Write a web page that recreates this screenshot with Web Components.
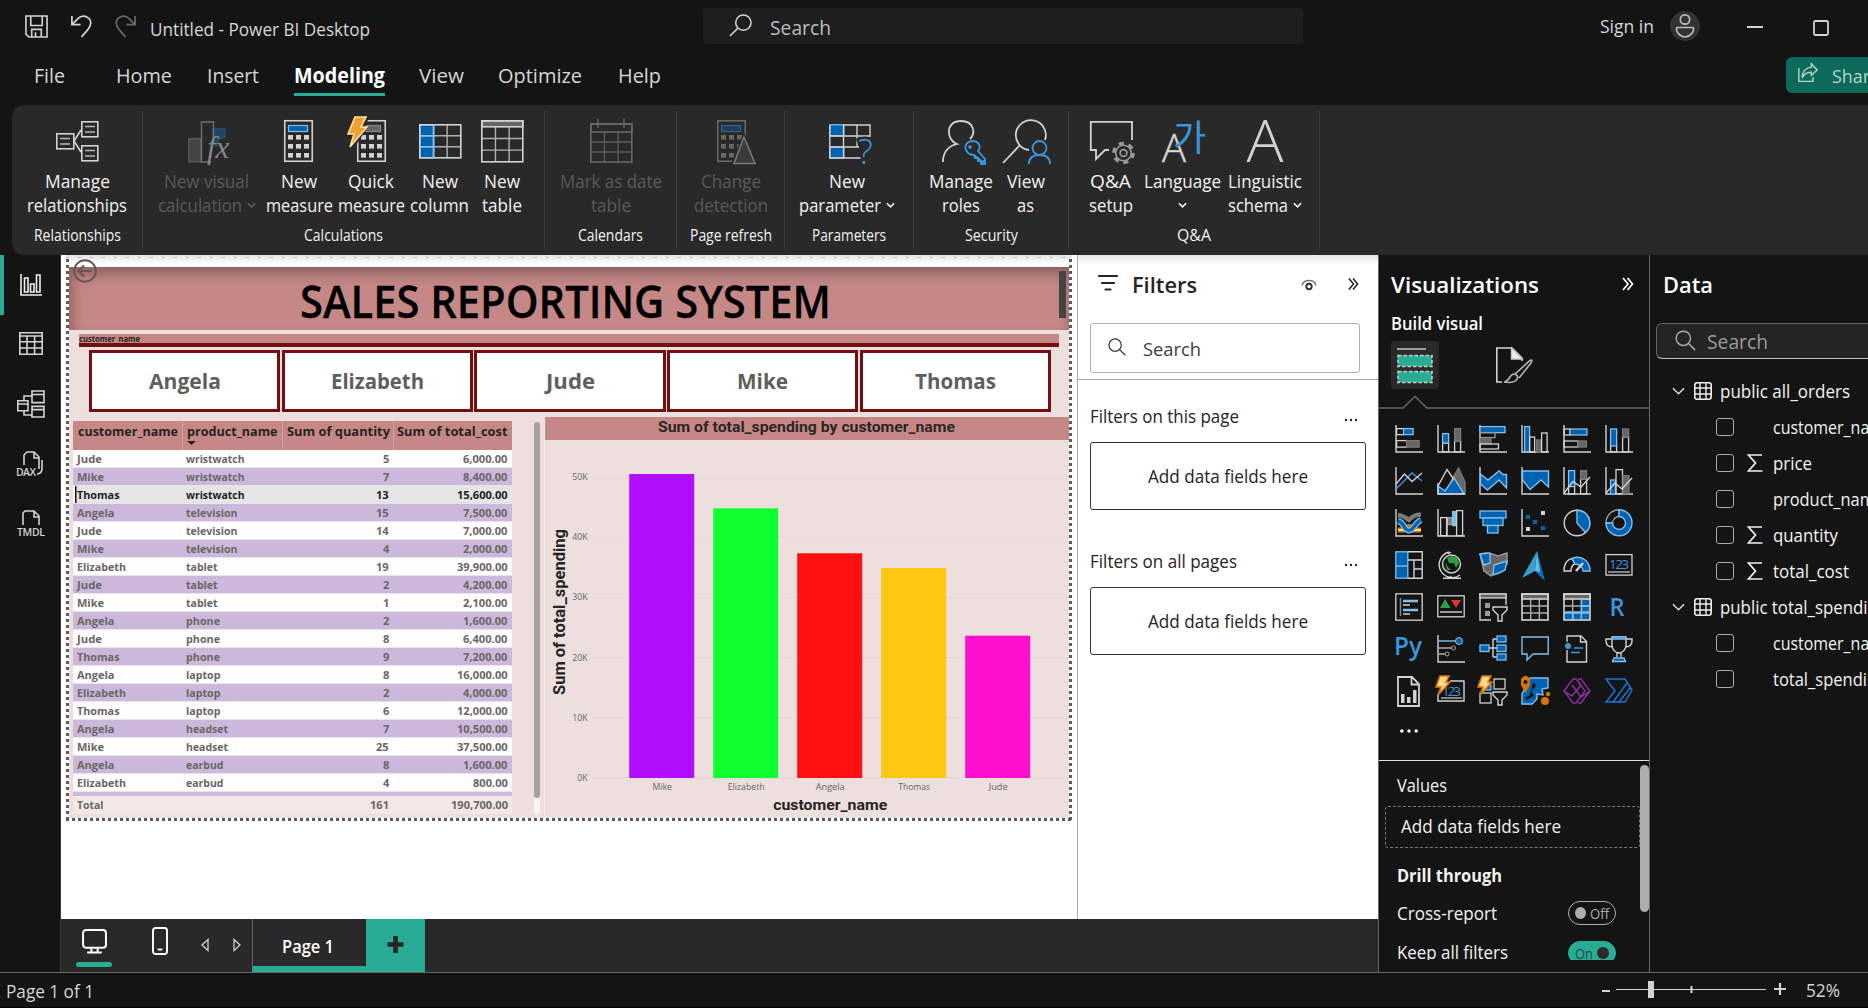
<!DOCTYPE html>
<html lang="en">
<head>
<meta charset="utf-8">
<title>Untitled - Power BI Desktop</title>
<style>
html,body{margin:0;height:100%;overflow:hidden;background:#141414}
body{font-family:"Open Sans","Noto Sans",sans-serif;color:#d6d6d6}
</style>
</head>
<body>
<pbi-app></pbi-app>
<script>
const L='#d2d2d2', G='#797775', B='#0063b1', LB='#83beec', MB='#3a96dd', O='#d87400';
const axis=`<path d="M1 0V27H28" fill="none" stroke="${L}" stroke-width="1.4"/>`;
const r=(x,y,w,h,f='none',s=L,sw=1.3)=>`<rect x="${x}" y="${y}" width="${w}" height="${h}" fill="${f}" stroke="${s}" stroke-width="${sw}"/>`;
const p=(d,s=L,f='none',sw=1.4,x='')=>`<path d="${d}" fill="${f}" stroke="${s}" stroke-width="${sw}" ${x}/>`;
const calc=(x,s,d,ds)=>r(x+.75,3.75,27.5,40.5,'none',s,1.6)+r(x+4.5,8.5,19,6,d,ds,1.2)+[18,27,36].map(y=>[4,12,20].map(k=>`<rect x="${x+k}" y="${y}" width="5" height="4.6" fill="${s}"/>`).join('')).join('');
const grid=(x,y,w,h,hy,s,g)=>r(x,y,w,hy,g,s,1.6)+p(`M${x+w/3} ${y+hy}V${y+h}M${x+2*w/3} ${y+hy}V${y+h}M${x} ${y+hy+(h-hy)/3}h${w}M${x} ${y+hy+2*(h-hy)/3}h${w}`,s,'none',1.4,'opacity=".8"')+r(x,y,w,h,'none',s,1.6);
const bolt=(x,y,k=1)=>`<path transform="translate(${x} ${y}) scale(${k})" d="M8 0H19L14 10H20L3 30L7 17H1Z" fill="#f0a030" stroke="#ffe4a0" stroke-width="1.6"/>`;
const bolt2=`<path d="M3 -1H12L9 5H13L1 18L4 10H-1Z" fill="#ffd98a" stroke="${O}" stroke-width="1.6"/>`;
const globe=`<circle cx="14.5" cy="13" r="9" fill="none" stroke="${L}" stroke-width="1.4"/><path d="M10 7L14 5L20 6L22 12L19 17L17 12L12 12ZM8 11L11 16L14 19L10 19Z" fill="#2f9e44"/>`+p('M12 1A13 13 0 1 0 23 24M14 25V27M6 27.3H24M11 3L14 1');
const ICONS={
 save:[24,24,p('M1 1H23V23H4L1 20ZM6 1V11H18V1M7 23V15H17V23M11 18V23',L,'none',1.7)],
 undo:[24,24,p('M2 1V10H11M2 10L8 4C14-2 24 3 21 11C20 15 16 18 12 23',L,'none',1.8)],
 redo:[24,24,p('M22 1V10H13M22 10L16 4C10-2 0 3 3 11C4 15 8 18 12 23','#686868','none',1.8)],
 lens:[24,24,p('M9 15L1 23',L,'none',1.6)+`<circle cx="15" cy="9" r="8" fill="none" stroke="${L}" stroke-width="1.6"/>`],
 find:[24,24,p('M15.5 15.5L23 23','currentColor','none',1.7)+`<circle cx="9.5" cy="9.5" r="8.2" fill="none" stroke="currentColor" stroke-width="1.7"/>`],
 user:[30,30,`<circle cx="15" cy="15" r="15" fill="#333"/><circle cx="15" cy="8.5" r="4.7" fill="none" stroke="#bbb" stroke-width="1.7"/>`+p('M7 16.5H23C25 20 20 26 15 26S5 20 7 16.5Z','#bbb','none',1.7)],
 min:[16,16,p('M0 8H16',L,'none',2)],
 max:[16,16,`<rect x="1" y="1" width="14" height="14" rx="1.5" fill="none" stroke="${L}" stroke-width="1.8"/>`],
 share:[24,24,p('M1 6V22H18V17M16 1L23 8.5L16 15V11C11 11 7 13 5 18C5 11 9 6 16 5Z','#b9d2cd','none',1.7)],
 chev:[10,6,p('M1 1L5 5L9 1','currentColor','none',1.8)],
 rel:[48,48,p('M21 24L28 13M21 24L28 35',L,'none',1.7)+r(3.8,16.8,17,15,'none',L,1.6)+r(28.8,4.8,16,15,'none',L,1.6)+r(28.8,28.8,16,15,'none',L,1.6)+p('M7 21.5H17M7 27H17M32 9.5H42M32 15H42M32 33.5H42M32 39H42','#b5b5b5','none',1.6)],
 visual:[48,48,r(5.8,21.8,12,23,'#444','#5e5e5e')+p('M30 26V12H42V20L36 22L33 30','#29506e','#1e4363')+p('M28 45H18.5V5H30.5V27','#707070')+`<text x="24" y="41" font-family="Liberation Serif" font-style="italic" font-size="31" fill="#858585">fx</text>`],
 measure:[48,48,calc(9,L,B,LB)],
 quick:[48,48,calc(10,L,'#666','#888')+`<path d="M8 -2H23L18 10H21L7 31L4 26Z" fill="#292929"/>`+bolt(0,0)],
 column:[48,48,r(3.8,7.8,14,33,B,LB)+grid(3.8,7.8,41,33,0,L,'none')+p('M4 18.8H17M4 29.8H17M17.5 8V41',LB)],
 table:[48,48,grid(3.8,3.8,41,41,6,L,'#666')],
 calendar:[48,48,grid(3.8,7,41,38,8,'#686868','none')+p('M11 2V11M37 2V11','#686868')],
 change:[48,48,calc(10,'#686868','#1c3f60','#3b6484')+p('M37 21L48 46H27Z','#292929','#292929',5)+p('M37 20L48 46.5H27Z','#777','#3a3a3a',1.6)],
 param:[48,48,r(6.8,7.8,14,11,B,LB)+r(6.8,30,14,11,B,LB)+p('M20 8H47V20M6.8 8V41H40M20.5 8V41M34 8V30M7 19H47M7 30H36')+`<text x="35" y="47" font-family="Open Sans" font-size="35" font-weight="300" fill="${MB}" stroke="#292929" stroke-width="5" paint-order="stroke">?</text>`],
 roles:[48,48,p('M6 45C6 34 12 29 20 27C9 23 8 4 24 4C37 4 39 16 33 22',L,'none',1.8)+p('M37 38L47 46V43M37 38C27 38 25 25 35 24C43 24 44 31 41 34L48 42V47H44V44H41V41H38Z',MB,'none',1.8)+`<circle cx="33" cy="30" r="1.8" fill="${MB}"/>`],
 viewas:[48,48,p('M18 28L1 46M27 33A15 15 0 1 1 43 23',L,'none',1.8)+`<circle cx="37.5" cy="31" r="7" fill="none" stroke="${MB}" stroke-width="1.8"/>`+p('M27 47C27 41 31 38 37.5 38S48 41 48 47',MB,'none',1.8)],
 qa:[48,48,p('M22 33H18L9 42V33H3.8V4.8H45V23',L,'none',1.8)+`<circle cx="36.5" cy="36" r="9.3" fill="none" stroke="#9a9a9a" stroke-width="4" stroke-dasharray="4.9 4.84"/><circle cx="36.5" cy="36" r="7.8" fill="#292929" stroke="#9a9a9a" stroke-width="1.6"/><circle cx="36.5" cy="36" r="3.4" fill="none" stroke="#9a9a9a" stroke-width="1.6"/>`],
 lang:[48,48,`<text x="3" y="45" font-family="Open Sans" font-weight="300" font-size="39" fill="${L}" stroke="${L}" stroke-width=".500" textLength="24" lengthAdjust="spacingAndGlyphs">A</text><text x="14" y="34" font-family="Noto Sans CJK KR" font-size="36" fill="${MB}">가</text>`],
 ling:[48,48,`<text x="5.5" y="45" font-family="Open Sans" font-weight="300" font-size="58" fill="${L}" textLength="37" lengthAdjust="spacingAndGlyphs">A</text>`],
 nReport:[28,28,p('M4 3V24H25M7.5 7H11V21H7.5ZM13.5 13H17V21H13.5ZM19.5 4H23V21H19.5Z','#eee','none',1.6)],
 nTable:[28,28,p('M2.8 3.8H25.2V25.2H2.8ZM2.8 7H25M2.8 12.8H25M2.8 19H25M10 7V25M17.6 7V25',L,'none',1.6)],
 nModel:[28,28,p('M.8 10.8H11V20.8H.8ZM.8 14H11M15 1H27V12.6H15ZM15 4.5H27M15 16.4H27V27H15ZM15 19.6H27M7 10V6H15M7 21V25H15',L,'none',1.6)],
 nDax:[28,28,p('M7 14V4L10 1H17L22 6V18M17 1V7H22M25 9V17Q25 23 20 23',L,'none',1.6)+`<text x="-1" y="24.500" font-family="Open Sans" font-size="10.500" font-weight="600" fill="${L}" textLength="20">DAX</text>`],
 nTmdl:[28,28,p('M6 15V3L8 1H17L22 6V15M17 1V7H22',L,'none',1.6)+`<text x="0" y="25.500" font-family="Open Sans" font-size="10.500" font-weight="600" fill="${L}" textLength="28">TMDL</text>`],
 back:[24,24,`<circle cx="12" cy="12" r="10.800" fill="none" stroke="#625856" stroke-width="2"/>`+p('M19 12H6M11 6.500L5.500 12L11 17.500','#625856','none',2.2)],
 filter:[20,18,p('M1 2H19M4 9H16M7.500 15.500H12.500','#252525','none',2.2,'stroke-linecap="round"')],
 eye:[16,12,p('M1 6C3-.6 13-.6 15 6','#777','none',1.5)+`<circle cx="8" cy="7" r="2.700" fill="none" stroke="#333" stroke-width="1.900"/>`],
 more:[12,14,p('M1 1L6 7L1 13M5.500 1L10.500 7L5.500 13','currentColor','none',1.7)],
 dots:[14,4,`<g fill="currentColor"><circle cx="2" cy="2" r="1.200"/><circle cx="7" cy="2" r="1.200"/><circle cx="12" cy="2" r="1.200"/></g>`],
 build:[36,36,p('M0 2H29','#aaa','none',1.8)+`<g fill="#2aac94" stroke="#ccc" stroke-width="1.600" stroke-dasharray="3.500 2"><rect x="1" y="8.500" width="34" height="11"/><rect x="1" y="24.500" width="34" height="11"/></g>`],
 format:[36,36,p('M6 35H.8V1H16L26 11V14',L,'none',1.6)+p('M15.500 1V12H26Z','#ccc','#eee')+p('M8 35C14 35 13 26 19 27C23 29 23 35 13 35.500ZM19 27L34 13.500Q37 12 35 16L23 31','#b5b5b5','#141414',1.6)],
 desktop:[24,24,`<rect x="1" y="1" width="22" height="17" rx="3" fill="none" stroke="#fff" stroke-width="1.900"/>`+p('M9 18V22M15 18V22M5 22.600H19','#fff','none',1.9)],
 phone:[16,28,`<rect x="1" y="1" width="14" height="26" rx="2.500" fill="none" stroke="#fff" stroke-width="1.900"/>`+p('M5.500 22.500H10.500','#fff','none',1.8)],
 prev:[8,14,p('M7 1.500V12.500L1 7Z',L,'none',1.3)],
 next:[8,14,p('M1 1.500V12.500L7 7Z',L,'none',1.3)],
 plus:[16,17,p('M8 0V17M0 8.500H16','#252525','none',4.6)],
 plus2:[12,12,p('M6 0V12M0 6H12',L,'none',2.2)],
 minus:[8,4,p('M0 2H8',L,'none',2)],
 tchev:[14,9,p('M1 1L7 7L13 1','#ddd','none',1.6)],
 tgrid:[18,18,`<rect x=".800" y=".800" width="16.400" height="16.400" rx="2.500" fill="none" stroke="#eee" stroke-width="1.600"/>`+p('M6 1V17M12 1V17M1 6H17M1 12H17','#eee','none',1.4)],
 sigma:[16,18,p('M15 1H1.500L8.500 9L1.500 17H15.500','#eee','none',1.7)],
 v1:axis+r(1.6,3.6,7,6)+r(8.6,3.6,9.5,6,B,LB)+r(1.6,15.6,10,6.5)+r(11.6,15.6,12.5,6.5,'#666',G),
 v2:axis+r(5.6,18,6,9)+r(5.6,8.600,6,9.4,B,LB)+r(17.6,16,6,11)+r(17.6,3.6,6,12.4,'#666',G),
 v3:axis+r(1,1.6,25,6,B,LB)+r(1,7.6,15,5,'none','#999')+r(1,14,11,4.5,'#666',G)+r(1,19,18.5,5),
 v4:axis+r(3.6,1.6,5,25,B,LB)+r(8.6,12,5,15)+r(15.6,15,4.500,12,'#666',G)+r(20.6,8,5.5,19),
 v5:axis+r(1,4,6,6)+r(7,4,17,6,B,LB)+r(1,16,14,6)+r(15,16,8.500,6,'#666',G),
 v6:axis+r(5.6,20,6,7)+r(5.6,4,6,17,B,LB)+r(17.6,12,6,15)+r(17.6,4,6,8,'#666',G),
 v7:axis+p('M1 22L17 6L27 14',MB)+p('M1 17L9.500 7L17 14.500L27 6'),
 v8:p('M14 14L21.500 1L28 15V27Z',G,'#666')+p('M1 19L10 2.500L18 14')+p('M1 19L8 24L17 11L27 27H1Z',LB,B)+p('M1 16V27H28'),
 v9:axis+p('M1.500 7L9 13L20 4L24 7.500H27.500V21L20 13L8.500 23L1.500 17Z',LB,B),
 v10:axis+p('M1.500 4H27.500V20L20 13L9 22.500L1.500 13Z',LB,B),
 v11:axis+r(5.6,18,6,9)+r(5.6,3.6,6,16,B,LB)+r(17.6,12,6,15)+r(17.6,3.6,6,8.4,'#666',G)+p('M1 26L10 14.500L18 20L27 10'),
 v12:axis+r(5.6,13,5,14,B,LB)+r(11,2.600,6.500,24)+r(18,8.600,6,18,'#666',G)+p('M1 26L10 16L17 22L27 11'),
 v13:axis+p('M3 21H9Q14 14 19 21H26',O,'none',5)+p('M3 21H9M19 21H26','#ffd98a','none',1.8)+p('M3 6Q9 7 14 11Q20 5 26 6','#797979','none',4.5)+p('M3 12Q7 13 10 19Q14 24 18 19Q22 13 26 11',LB,'none',6)+p('M3 12Q7 13 10 19Q14 24 18 19Q22 13 26 11',B,'none',3.4),
 v14:axis+r(3.6,8.6,6,18)+r(10.600,8.600,4,7,'#777','#999')+r(15.6,2.600,3,14,LB,LB)+r(19.6,1.600,6,25)+p('M10 9V27'),
 v15:r(1,2,26,7,B,LB)+r(4,9,20,7.500,B,LB)+r(8.5,16.500,10.500,7.500,B,LB),
 v16:axis+`<path d="M5 6h4v4h-4zM12 11h4v4h-4zM20 17h4v4h-4z" fill="${B}"/><path d="M20 2h4v4h-4zM5 18h4v4h-4z" fill="${L}"/>`,
 v17:`<circle cx="14" cy="14" r="12.800" fill="none" stroke="${L}" stroke-width="1.400"/>`+p('M14 14V1.200A12.800 12.800 0 0 1 22.500 23.500Z',LB,B),
 v18:p('M14 .800A13 13 0 0 0 1 14H7.500A6.500 6.500 0 0 1 14 7.500Z','#999')+p('M14 .800A13 13 0 1 1 1 14H7.500A6.500 6.500 0 1 0 14 7.500Z',LB,B),
 v19:r(.8,.8,12,26.4,B,LB)+p('M1 15H13',LB)+p('M13 .800H27.200V27.200H13M13 9H27M19 9V27M19 18H27'),
 v20:globe,
 v21:p('M1 3L7 2L13 3L19 5L28 2V13L19 14L16 20L12 25L5 20L3 12Z','#999','#666')+p('M1 3L11 2L11 12L5 14Z',LB,B)+p('M15 14L28 10L26 19L20 22L14 24Z',LB,B),
 v22:`<path d="M16 0L1 27L14 20Z" fill="#3a9cc8"/><path d="M16 0L24 30L14 20Z" fill="#1372b8"/><path d="M16 0L14 20L19 21Z" fill="#5cc0e4"/>`,
 v23:p('M1 20C1 12 5 8 9 7.500L12 13C9 14 8 17 8 20Z')+p('M9 7.500C20 3 27 12 27 20H20C20 16 16 13 12 13Z',LB,B)+p('M13 20L20 12',L,'none',2.6),
 v24:r(1,3.600,26,20.500)+p('M3 21H25','#aaa','none',1.5)+`<text x="4" y="18" font-family="Open Sans" font-size="13.500" fill="${MB}" textLength="20">123</text>`,
 v25:r(.8,.8,26.4,26.4)+p('M5.500 5V23','#888')+p('M8 8H23M8 17H23',LB,'none',2.6)+p('M8 12H15M8 21H15',L),
 v26:r(.8,2.8,26.4,21)+`<path d="M3 15L8 6L13.500 15Z" fill="#2f9e44"/><path d="M14 7H24L19 15Z" fill="#e03131"/>`+p('M3 19H25'),
 v27:p('M12 27H1V1H27V12')+r(1,1,26,4,'#666')+`<path d="M6 10h5v5h-5zM6 18h5v5h-5z" fill="#999"/>`+p('M14 14H28V17L23 22V28H19V22L14 17Z',L,'#141414'),
 v28:grid(1,1,26,26,5,L,'#666'),
 v29:`<path d="M18 6H27V27H1V19H18Z" fill="${B}"/>`+grid(1,1,26,26,5,L,'#666')+p('M18.500 6V27M10 19V27M1 19H27M18 13H27',LB),
 v30:`<text x="4.500" y="23" font-family="Open Sans" font-size="25" font-weight="600" fill="${MB}" textLength="15" lengthAdjust="spacingAndGlyphs">R</text>`,
 v31:`<text x="-1" y="20" font-family="Open Sans" font-size="25" font-weight="600" fill="${MB}" textLength="28" lengthAdjust="spacingAndGlyphs">Py</text>`,
 v32:axis+p('M1 6H20',LB)+`<circle cx="22" cy="6" r="3.500" fill="${B}" stroke="${LB}"/>`+p('M1 13H15M1 19H8','#aaa')+`<circle cx="16.500" cy="13" r="2" fill="none" stroke="#aaa"/><circle cx="10" cy="19" r="2" fill="none" stroke="#aaa"/>`,
 v33:p('M10 13H18M14 4V22M14 4H18M14 22H18')+r(1,10,9,6.500,B,LB)+r(18,1,9,6,B,LB)+r(18,10,9,6.500,B,LB)+r(18,19,9,6,B,LB),
 v34:p('M1 2H27.200V19H12L6 25V19H1Z',LB),
 v35:p('M4 7V1H18L23.500 6.500V27H4V15M17.500 1V7H23.500')+`<circle cx="5" cy="11" r="3" fill="${MB}"/>`+p('M11 13H20M8 17.500H17',MB),
 v36:p('M7 2H21M7 2V11Q8 17 14 18Q20 17 21 11V2M7 4H1V6Q1 12 8 12M21 4H27V6Q27 12 20 12M12 18V22M16 18V22')+p('M7 2H21V4H7ZM9 23H19L20.500 26.500H7.500Z',LB,B),
 v37:p('M3 0H17L24 7V29H3ZM16.500 0V7.500H24',L,'none',1.8)+`<path d="M6 17h3.500v9h-3.500zM12 20h3.500v6h-3.500zM18 13h3.500v13h-3.500z" fill="${L}"/>`,
 v38:p('M13 4H27V24H1V17')+p('M4 21H25','#aaa','none',1.5)+`<text x="5" y="19" font-family="Open Sans" font-size="13.500" fill="${MB}" textLength="19">123</text>`+bolt2,
 v39:r(15,2,11,10)+r(1,16,11,10)+r(6,8,6,5,B,LB)+p('M14 15H28V18L23 23V28H19V23L14 18Z',L,'#141414')+bolt2,
 v40:p('M9 1H27V11L21 12L22 18L16 17V22L11 27H1V17Z',LB,B)+p('M12 3L16 9L11 14L14 19L5 24L3 20L8 18Z',B,'#141414')+`<path d="M4.500 16L0 8V2L3-1H6L9 2V8Z" fill="${O}"/><circle cx="4.500" cy="5" r="2" fill="#141414"/><circle cx="24" cy="24" r="4" fill="${O}"/><circle cx="27" cy="17" r="2.200" fill="${O}"/>`,
 v41:p('M1 14L10 2H13L18 8L9 19ZM9 8L18 20L27 14L18 2H15M1 14L10 26H13L22 14L13 26M15 26H18L27 14M13 2L22 14','#8b2fa0','none',1.4),
 v42:p('M1 2H20L27 13L20 25H1L10 14ZM8 25L22 6M14 25L25 11','#1a78d8','none',1.4)
};

/* Base class: one open shadow root, filled from the class's css and view */
class Part extends HTMLElement{
  connectedCallback(){
    if(this.shadowRoot)return;
    const s=this.attachShadow({mode:'open'});
    s.innerHTML=`<style>*{box-sizing:border-box}:host{box-sizing:border-box}${this.css()}</style>${this.view()}`;
  }
  css(){return ''} view(){return '<slot></slot>'}
  at(n,d=''){return this.getAttribute(n)??d}
}
const T=(w,t,st='')=>`<fit-text w="${w}" style="${st}">${t.replace(/&/g,'&amp;')}</fit-text>`;
const I=(n,w,h,st='')=>`<ui-icon n="${n}" w="${w}" h="${h}" style="${st}"></ui-icon>`;

class UiIcon extends Part{
  css(){return `:host{display:block;flex:none;width:${this.at('w')}px;height:${this.at('h')}px}svg{display:block;overflow:visible}`}
  view(){let d=ICONS[this.at('n')];if(!Array.isArray(d))d=[28,28,d];
    return `<svg width="${this.at('w')}" height="${this.at('h')}" viewBox="0 0 ${d[0]} ${d[1]}">${d[2]}</svg>`}
}
class FitText extends Part{
  css(){return `:host{display:block;flex:none;white-space:nowrap;width:${this.at('w')}px}span{display:inline-block;transform-origin:0 50%}`}
  view(){return '<span><slot></slot></span>'}
  connectedCallback(){super.connectedCallback();
    const s=this.shadowRoot.querySelector('span'),n=s.offsetWidth;
    if(n)s.style.transform=`scaleX(${this.at('w')/s.getBoundingClientRect().width})`;
  }
}
class TitleBar extends Part{
  css(){return `:host{display:flex;height:52px;font-size:18px;line-height:24px;align-items:flex-start}
  .s{display:flex;width:600px;height:36px;background:#1e1e1e;border-radius:4px;margin:8px 0 0 333px;padding:6px 0 0 26px;font-size:20px;line-height:26px;color:#bdbdbd}`}
  view(){return I('save',23,23,'margin:15px 0 0 25px')+I('undo',23,23,'margin:15px 0 0 22px')+I('redo',23,23,'margin:15px 0 0 21px')+T(220,'Untitled - Power BI Desktop','margin:17px 0 0 13px')+
  `<div class="s">${I('lens',23,23)}${T(61,'Search','margin:1px 0 0 18px')}</div>`+T(54,'Sign in','margin:14px 0 0 297px')+I('user',30,30,'margin:11px 0 0 16px')+I('min',16,16,'margin:19px 0 0 47px')+I('max',16,16,'margin:20px 0 0 50px')}
}
class MenuTabs extends Part{
  css(){return `:host{display:flex;height:53px;font-size:20.5px;line-height:28px;align-items:flex-start;padding-top:9px}
  .on{color:#fff;font-weight:700;height:35px;border-bottom:3px solid #2aac94}
  .sh{display:flex;margin:-4px 0 0 1125px;height:36px;width:120px;background:#0e6a5a;border-radius:6px;color:#b9d2cd;font-size:18px;line-height:24px;padding:7px 0 0 10px;flex:none}`}
  view(){return [['File',31,34],['Home',56,51],['Insert',52,35],['Modeling',91,35,1],['View',45,34],['Optimize',84,34],['Help',43,36]].map(m=>m[3]?`<div class="on" style="margin-left:${m[2]}px">${T(m[1],m[0])}</div>`:T(m[1],m[0],`margin-left:${m[2]}px`)).join('')+
  `<div class="sh">${I('share',24,20,'margin-top:-1px')}${T(48,'Share','margin-left:12px')}</div>`}
}
class RibbonButton extends Part{
  css(){return `:host{display:flex;flex-direction:column;align-items:center;flex:none;width:${this.at('w')}px;margin-left:${this.at('gap',0)}px;color:${this.hasAttribute('off')?'#5a5a5a':'#f2f2f2'};font-size:18px;line-height:24px}
  .l{display:flex;align-items:center;height:24px;gap:5px}ui-icon{margin-bottom:4px}.l ui-icon{margin:0}`}
  view(){const c=this.hasAttribute('menu')?I('chev',9,6):'';
    const [a,aw]=this.at('a').split('|'),[b,bw]=this.at('b').split('|');
    return I(this.at('icon'),48,48)+`<div class="l">${T(aw,a)}</div><div class="l">${b?T(bw,b):''}${c}</div>`}
}
class RibbonGroup extends Part{
  css(){return `:host{display:flex;flex-direction:column;flex:none;width:${this.at('w')}px;padding-top:6px;margin-top:6px;height:138px;border-right:1px solid #3d3d3d;color:#f2f2f2}
  .b{display:flex;height:108px;justify-content:center}.g{display:flex;justify-content:center;font-size:15.5px;line-height:21px}`}
  view(){return `<div class="b"><slot></slot></div><div class="g">${T(this.at('lw'),this.at('label'))}</div>`}
}
class RibbonBar extends Part{
  css(){return `:host{display:flex;height:150px;margin-left:12px;background:#292929;border-radius:12px 0 0 12px;position:relative;z-index:2}`}
  view(){const b=(i,w,gap,a,b,x='')=>`<ribbon-button icon="${i}" w="${w}" gap="${gap}" a="${a}" b="${b}" ${x}></ribbon-button>`;
  const g=(w,l,lw,c)=>`<ribbon-group w="${w}" label="${l}" lw="${lw}">${c}</ribbon-group>`;
  return g(131,'Relationships',87,b('rel',100,0,'Manage|65','relationships|100'))+
  g(402,'Calculations',79,b('visual',98,-5,'New visual|85','calculation|84','off menu')+b('measure',67,10,'New|36','measure|67')+b('quick',67,5,'Quick|46','measure|67')+b('column',60,5,'New|36','column|59')+b('table',46,9,'New|36','table|40'))+
  g(132,'Calendars',65,b('calendar',102,0,'Mark as date|102','table|40','off'))+
  g(108,'Page refresh',82,b('change',76,0,'Change|60','detection|74','off'))+
  g(129,'Parameters',74,b('param',96,-4,'New|36','parameter|82','menu'))+
  g(155,'Security',53,b('roles',64,-6,'Manage|64','roles|38')+b('viewas',44,11,'View|38','as|17'))+
  g(251,'Q&amp;A',34,b('qa',46,2,'Q&amp;A|41','setup|44')+b('lang',78,10,'Language|77','','menu')+b('ling',76,5,'Linguistic|74','schema|60','menu'))}
}
class NavRail extends Part{
  css(){return `:host{display:flex;flex-direction:column;width:61px;border-right:1px solid #3b3b3b;flex:none}
  div{height:60px;display:flex;align-items:center;padding-left:17px}.on{border-left:4px solid #2aac94;padding-left:13px}`}
  view(){return ['nReport','nTable','nModel','nDax','nTmdl'].map((n,i)=>`<div class="${i?'':'on'}" style="padding-bottom:${[0,4,3,0,2][i]}px">${I(n,28,28)}</div>`).join('')}
}
class ReportBanner extends Part{
  css(){return `:host{display:flex;justify-content:center;position:relative;height:63px;margin-top:12px;background:#c58886;box-shadow:inset 6px 10px 14px -3px #75504fb0,inset -6px 0 8px -4px #75504f60;color:#000;font-size:45px;font-weight:600;line-height:60px;padding-top:4px;padding-right:8px}
  .back{position:absolute;left:4px;top:-8px}.bar{position:absolute;left:990px;top:4px;width:7px;height:47px;background:#444}fit-text{-webkit-text-stroke:.3px #000}`}
  view(){return `${T(531,'SALES REPORTING SYSTEM')}<div class="back">${I('back',24,24)}</div><div class="bar"></div>`}
}
class NameSlicer extends Part{
  css(){return `:host{display:block;padding:4px 10px 0;height:87px}
  .h{height:13px;background:#c58886;border-bottom:4px solid #701010;font:bold 8.500px/9px "Noto Sans",sans-serif;color:#2b2222}
  .r{display:flex;gap:1.2px;margin:2.500px 8px 0 10px}
  .b{flex:1;height:62.5px;border:3px solid #701010;background:#fff;display:flex;justify-content:center;align-items:center;color:#605e5c;font-weight:700;font-size:21px}`}
  view(){return `<div class="h">${T(61,'customer_name')}</div><div class="r">${[['Angela',72],['Elizabeth',93],['Jude',49],['Mike',51],['Thomas',81]].map(x=>`<div class="b">${T(x[1],x[0])}</div>`).join('')}</div>`}
}
const W={Jude:25,Mike:27,Thomas:42.5,Angela:37.5,Elizabeth:49,wristwatch:58.5,television:51.5,tablet:31.500,phone:34,laptop:34.5,headset:42,earbud:37.500,Total:26.500};
const nw=s=>[...s].reduce((a,c)=>a+(/\d/.test(c)?6.35:3.1),0);
class OrdersTable extends Part{
  css(){return `:host{display:block;width:439px;margin-left:4px;flex:none;font-weight:700;font-size:11.2px;color:#6a6664}
  .r{display:grid;grid-template-columns:109.5px 100px 111px 118.500px;height:18px;line-height:18px;background:#fffdfe;border-bottom:1px solid #eae2ee}
  .r>*{margin-left:4px}.r .n{margin:0 4.500px 0 0;display:flex;justify-content:flex-end}.r>:nth-child(2):not(.n){margin-left:3.500px}
  .p{background:#cbb8db}.s{background:#e5e5e5;color:#1c1c1c;box-shadow:inset 2px 0 #fff,inset 3.500px 0 #111}
  .h{display:grid;grid-template-columns:109.5px 100px 111px 118.500px;height:29.500px;background:#c58886;border-bottom:1.500px solid #3b83c8;color:#252423;font-size:13px;line-height:20px}
  .h>div{border-right:1px solid #d0a09f;padding:0 0 0 4.500px}.h svg{display:block;margin-top:0}
  .cut{height:4.5px;background:#cbb8db}.t{background:#f2e8e6;border:0}`}
  view(){const d=`Jude,wristwatch,5,6|Mike,wristwatch,7,8.4|Thomas,wristwatch,13,15.6|Angela,television,15,7.5|Jude,television,14,7|Mike,television,4,2|Elizabeth,tablet,19,39.9|Jude,tablet,2,4.2|Mike,tablet,1,2.1|Angela,phone,2,1.6|Jude,phone,8,6.4|Thomas,phone,9,7.2|Angela,laptop,8,16|Elizabeth,laptop,2,4|Thomas,laptop,6,12|Angela,headset,7,10.5|Mike,headset,25,37.5|Angela,earbud,8,1.6|Elizabeth,earbud,4,.8`.split('|').map(x=>x.split(','));
  const n=s=>`<div class="n">${T(nw(s),s)}</div>`;
  return `<div class="h"><div>${T(100,'customer_name')}</div><div>${T(90.5,'product_name')}<svg width="9" height="4"><path d="M0 0H9L4.500 4Z" fill="#222"/></svg></div><div style="padding-left:4px">${T(103,'Sum of quantity')}</div><div style="border:0;padding-left:3.500px">${T(110.500,'Sum of total_cost')}</div></div>`+
  d.map((x,i)=>{const m=(+x[3]*1000).toLocaleString('en-US',{minimumFractionDigits:2});return `<div class="r ${i==2?'s':i%2?'p':''}" style="${i<2?'height:17.600px;line-height:'+(i?18:17)+'px;':''}${i==0?'margin-top:-.500px;height:18.100px':''}">${T(W[x[0]],x[0])}${T(W[x[1]],x[1])}${n(x[2])}${n(m)}</div>`}).join('')+
  `<div class="cut"></div><div class="r t" style="height:17.500px">${T(W.Total,'Total')}<i></i>${n('161')}${n('190,700.00')}</div>`}
}
class SpendingChart extends Part{
  css(){return `:host{display:block;width:525px;margin-left:auto;flex:none;border-left:1.500px solid #f7efef}
  .h{height:23px;background:#c58886;display:flex;justify-content:center;font:bold 15px/20px Roboto,sans-serif;color:#2c2524;padding-right:1px}svg{display:block}`}
  view(){const tl=w=>`textLength="${w}" lengthAdjust="spacingAndGlyphs"`;
  const bars=[[629,474,'#b010ff','Mike',19.500],[713,508.3,'#10ff30','Elizabeth',37],[797,553.3,'#ff1010','Angela',29],[881,568,'#ffc810','Thomas',32],[965,635.7,'#ff10d0','Jude',19]];
  return `<div class="h">${T(297,'Sum of total_spending by customer_name')}</div>
  <svg width="523.500" height="377" viewBox="544.8 440 523.500 377">
  ${[50,40,30,20,10,0].map((k,i)=>{const y=477+i*60.2;return `<path d="M594 ${y}H1069" stroke="#ccbebe" stroke-width="1" stroke-dasharray="1 3"/><text x="587.500" y="${y+3}" text-anchor="end" font-family="Open Sans" font-size="9.500" fill="#666" ${tl(k?15.500:10.500)}>${k}K</text>`}).join('')}
  ${bars.map(b=>`<rect x="${b[0]}" y="${b[1]}" width="65" height="${778-b[1]}" fill="${b[2]}"/><text x="${b[0]+33}" y="790" text-anchor="middle" font-family="Open Sans" font-size="9" fill="#666" ${tl(b[4])}>${b[3]}</text>`).join('')}
  <text x="773" y="810" font-family="Roboto" font-weight="700" font-size="15.500" fill="#252423" ${tl(114)}>customer_name</text>
  <text transform="translate(565 695) rotate(-90)" font-family="Roboto" font-weight="700" font-size="16" fill="#252423" ${tl(166)}>Sum of total_spending</text>
  </svg>`}
}
class ReportPage extends Part{
  css(){return `:host{display:block;width:1016px;height:664px;background:#fff;flex:none;overflow:hidden}
  .f{width:1006px;height:566px;margin-left:5px;padding:0 3px 3px;background:
   linear-gradient(#0000001c,#0000) 0 0/100% 9px no-repeat,
   repeating-linear-gradient(90deg,#ccc 0 3px,#0000 3px 12px) 0 2px/100% 1px no-repeat,
   repeating-linear-gradient(#5c5c5c 0 3px,#0000 3px 6px) 0 4px/3px 100% no-repeat,
   repeating-linear-gradient(#5c5c5c 0 3px,#0000 3px 6px) 100% 4px/3px 100% no-repeat,
   repeating-linear-gradient(90deg,#5c5c5c 0 3px,#0000 3px 6px) 0 100%/100% 3px no-repeat}
  .p{display:flex;flex-direction:column;height:563px}
  .in{background:#eedfdf;flex:1}.row{display:flex;height:400px}
  .sb{width:6.500px;height:392px;margin:5px 0 0 21.500px;background:#f8f2f2;border-radius:3px}.sb div{height:376px;border-radius:3px;background:#a8a09e}`}
  view(){return `<div class="f"><div class="p"><report-banner></report-banner><div class="in"><name-slicer></name-slicer><div class="row"><orders-table style="margin-top:4px"></orders-table><div class="sb"><div></div></div><spending-chart></spending-chart></div></div></div></div>`}
}
class FiltersPane extends Part{
  css(){return `:host{display:block;width:301px;height:664px;background:linear-gradient(#0000001c,#0000) 0 0/100% 9px no-repeat #fff;border-left:1px solid #aaa;color:#252423;flex:none;font-size:18px;line-height:24px}
  .h{display:flex;align-items:flex-start;padding:14px 0 0 20px;height:68px;font-size:22px;font-weight:600;line-height:30px}
  .s{display:flex;align-items:center;width:270px;height:50px;border:1px solid #b0b0b0;border-radius:3px;margin-left:12px;padding-left:17px;font-size:19px;color:#3c3c3c}
  .d{border-bottom:1px solid #aaa;height:7px}
  .t{display:flex;align-items:center;margin:24px 0 14px 12px}.b{width:276px;height:68px;border:1px solid #333;border-radius:3px;margin-left:12px;display:flex;align-items:center;justify-content:center}
  .t2{margin-top:39px}`}
  view(){const box=`<div class="b">${T(160,'Add data fields here')}</div>`;
  return `<div class="h">${I('filter',20,18,'margin-top:5px')}${T(65,'Filters','margin-left:14px')}${I('eye',16,13,'margin:10px 0 0 104px')}${I('more',11,14,'margin:8px 0 0 31px')}</div>
  <div class="s">${I('find',18,18,'margin-bottom:2px')}${T(58,'Search','margin:2px 0 0 17px')}</div><div class="d"></div>
  <div class="t">${T(149,'Filters on this page')}${I('dots',14,4,'margin:8px 0 0 105px')}</div>${box}<div class="t t2">${T(147,'Filters on all pages')}${I('dots',14,4,'margin:8px 0 0 107px')}</div>${box}`}
}
class PageTabs extends Part{
  css(){return `:host{display:flex;height:53px;background:#292929;color:#fff;font-size:18px;line-height:24px;font-weight:600}
  .d{width:36px;margin-left:15px;display:flex;flex-direction:column;align-items:center;padding-top:10px}.d div{margin-top:8px;width:36px;height:5px;border-radius:3px;background:#2aac94}
  .t{width:114px;margin-left:11px;border-left:1px solid #666;border-bottom:6px solid #2aac94;padding:15px 0 0 29px}.a{width:59px;background:#2aac94;padding:17px 0 0 21px}`}
  view(){return `<div class="d">${I('desktop',25,25)}<div></div></div>${I('phone',16,28,'margin:8px 0 0 40px')}${I('prev',8,14,'margin:19px 0 0 33px')}${I('next',8,14,'margin:19px 0 0 24px')}<div class="t">${T(52,'Page 1')}</div><div class="a">${I('plus',17,17)}</div>`}
}
class ToggleSwitch extends Part{
  css(){return `:host{display:flex;width:48px;height:24px;border-radius:12px;align-items:center;padding:0 6px;gap:4px;font-size:14px;line-height:20px;flex:none;border:1.500px solid #adadad;color:#adadad}
  i{width:12px;height:12px;border-radius:50%;background:#adadad}
  :host([on]){background:#2aac94;border-color:#2aac94;color:#1d4a42;flex-direction:row-reverse}:host([on]) i{background:#2b2b2b}`}
  view(){return `<i></i>${this.hasAttribute('on')?T(18,'On','margin-top:2px'):T(19,'Off','margin-top:2px')}`}
}
class VizPane extends Part{
  css(){return `:host{display:flex;flex-direction:column;width:272px;border:solid #666;border-width:0 1px;flex:none;color:#f2f2f2;font-size:18px;line-height:24px;overflow:hidden}
  .h{display:flex;padding:14px 0 0 12px;font-size:22px;font-weight:600;line-height:30px;color:#fff}
  .b{display:flex;padding:12px 0 0 12px;font-size:17.500px;font-weight:600;color:#fff}
  .m{display:flex;margin:6px 0 0 12px;align-items:center;gap:57px}.m div{width:48px;height:48px;border-radius:4px;background:#292929;padding:6px}
  .n{display:block;margin-top:6px}
  .g{display:grid;grid-template-columns:repeat(6,28px);grid-auto-rows:28px;gap:14px;margin:16px 0 0 16px}
  .v{display:flex;margin-top:26px;border-top:1px solid #e0e0e0;height:212px}
  .c{width:261px;overflow:hidden}.sb{width:9px;height:147px;margin-top:4px;border-radius:5px;background:#adadad}
  .x{border:1px dashed #777;border-radius:3px;height:42px;width:255px;margin:9px 0 0 6px;padding:7px 0 0 15px}
  .o{display:flex;margin-left:18px}`}
  view(){return `<div class="h">${T(148,'Visualizations')}${I('more',12,14,'margin:8px 0 0 83px')}</div><div class="b">${T(92,'Build visual')}</div>
  <div class="m"><div>${I('build',36,36)}</div>${I('format',36,36)}</div>
  <svg class="n" width="270" height="14"><path d="M0 13H24L36 1.500L48 13H270" fill="none" stroke="#666" stroke-width="1.500"/></svg>
  <div class="g">${Array.from({length:42},(_,i)=>I('v'+(i+1),28,28)).join('')}</div>
  ${I('dots',20,6,'margin:23px 0 0 20px;color:#fff')}
  <div class="v"><div class="c">${T(50,'Values','margin:12px 0 0 18px')}<div class="x">${T(160,'Add data fields here')}</div>${T(105,'Drill through','margin:15px 0 0 18px;font-weight:700')}
  <div class="o" style="margin-top:14px;height:40px">${T(100,'Cross-report','margin-right:71px')}<toggle-switch></toggle-switch></div><div class="o" style="height:19px;overflow:hidden;">${T(111,'Keep all filters','margin-right:60px;margin-top:-1px')}<toggle-switch on></toggle-switch></div></div><div class="sb"></div></div>`}
}
class DataPane extends Part{
  css(){return `:host{display:block;flex:1;min-width:0;overflow:hidden;color:#f2f2f2;font-size:18px;line-height:24px}
  .h{padding:14px 0 0 13px;font-size:22px;font-weight:600;line-height:30px;color:#fff;height:68px}
  .s{display:flex;width:240px;height:36px;background:#242424;border:1px solid #666;border-bottom-color:#bbb;border-radius:6px;margin:0 0 14px 6px;padding:5px 0 0 18px;color:#9b9b9b;font-size:20px;line-height:26px}
  .r{display:flex;align-items:center;height:36px}.r i{width:18px;height:18px;border:1.300px solid #aaa;border-radius:3px;margin-left:66px;flex:none}.q{width:16px;margin:0 10px 0 13px;flex:none}`}
  view(){const p=(w,t)=>`<div class="r">${I('tchev',13,9,'margin-left:22px')}${I('tgrid',18,18,'margin:0 8px 0 9px')}${T(w,t)}</div>`,f=(w,t,s)=>`<div class="r"><i></i><div class="q">${s?I('sigma',16,18):''}</div>${T(w,t)}</div>`;
  return `<div class="h">${T(50,'Data')}</div><div class="s">${I('find',21,21,'color:#aaa;margin-top:1px')}${T(61,'Search','margin-left:11px')}</div>`+p(130,'public all_orders')+f(120,'customer_name')+f(39,'price',1)+f(111,'product_name')+f(65,'quantity',1)+f(76,'total_cost',1)+p(167,'public total_spending')+f(120,'customer_name')+f(113,'total_spending')}
}
class StatusBar extends Part{
  css(){return `:host{display:flex;height:36px;border-top:1px solid #666;border-bottom:1px solid #000;align-items:flex-start;font-size:18.500px;line-height:24px;padding:5px 0 0 6px}
  svg{display:block;flex:none;margin-left:6px}`}
  view(){return T(88,'Page 1 of 1','margin-top:1px')+I('minus',8,4,'margin:11px 0 0 1508px')+`<svg width="150" height="24"><path d="M0 11.500H150" stroke="#d2d2d2"/><path d="M32 3h6v17h-6zM74.500 8h2v7h-2z" fill="#d2d2d2"/></svg>`+I('plus2',12,12,'margin:5px 20px 0 8px')+T(34,'52%')}
}
class PbiApp extends Part{
  css(){return `:host{display:flex;flex-direction:column;width:1868px;height:1008px;overflow:hidden;background:#141414}.m{display:flex;height:717px}.r{display:flex}.c{flex:none;width:1317px}`}
  view(){return `<title-bar></title-bar><menu-tabs></menu-tabs><ribbon-bar></ribbon-bar><div class="m"><nav-rail></nav-rail><div class="c"><div class="r"><report-page></report-page><filters-pane></filters-pane></div><page-tabs></page-tabs></div><viz-pane></viz-pane><data-pane></data-pane></div><status-bar></status-bar>`}
}
Object.entries({'ui-icon':UiIcon,'title-bar':TitleBar,'menu-tabs':MenuTabs,'ribbon-button':RibbonButton,'ribbon-group':RibbonGroup,'ribbon-bar':RibbonBar,'nav-rail':NavRail,'report-banner':ReportBanner,'name-slicer':NameSlicer,'orders-table':OrdersTable,'spending-chart':SpendingChart,'report-page':ReportPage,'filters-pane':FiltersPane,'page-tabs':PageTabs,'toggle-switch':ToggleSwitch,'viz-pane':VizPane,'data-pane':DataPane,'status-bar':StatusBar,'pbi-app':PbiApp,'fit-text':FitText}).forEach(([n,c])=>customElements.define(n,c));
</script>
</body>
</html>
